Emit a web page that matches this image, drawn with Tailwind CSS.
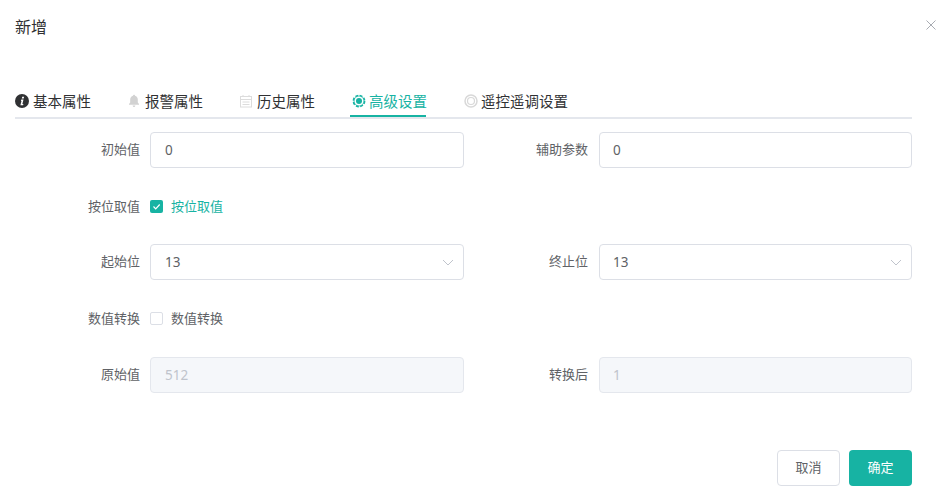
<!DOCTYPE html>
<html lang="zh-CN">
<head>
<meta charset="utf-8">
<script src="https://cdn.jsdelivr.net/npm/@tailwindcss/browser@4"></script>
</head>
<body class="bg-white font-['Noto_Sans','Noto_Sans_CJK_SC',sans-serif] text-[13px] text-[#606266]">
<div class="relative w-[951px] h-[492px] overflow-hidden">
  <h1 class="pl-[15px] pt-[15px] h-[88px] text-[16px] leading-[24px] font-normal text-[#303133]">新增</h1>
  <button class="absolute left-[926px] top-[20px] w-[10px] h-[10px] text-[#a8abb2]">
    <svg viewBox="0 0 10 10" class="w-[10px] h-[10px]" fill="none" stroke="currentColor" stroke-width="1"><path d="M.5.5l9 9M9.5.5l-9 9"/></svg>
  </button>

  <div class="ml-[15px] w-[897px] h-[31px] flex border-b-2 border-[#e4e7ed] text-[14.5px] leading-[26px] text-[#303133]">
    <div class="w-[112px] flex items-center h-[26px]">
      <svg viewBox="0 0 14 14" class="w-[14px] h-[14px] mr-[4px]"><circle cx="7" cy="7" r="7" fill="#303133"/><path d="M7.200 2.800h1.900l-.4 1.700H6.800zM6.300 5.600h2.200l-1.100 4.300h1l-.3 1.300H5.400l1.100-4.300h-.6z" fill="#fff"/></svg>
      <span>基本属性</span>
    </div>
    <div class="w-[112px] flex items-center h-[26px]">
      <svg viewBox="0 0 14 14" class="w-[14px] h-[14px] mr-[4px]" fill="#d2d2d2"><path d="M7 .800c.6 0 1 .4 1 .9 1.800.5 2.800 2 2.800 3.800v3l1.200 1.500v.7H2V10l1.200-1.500v-3C3.200 3.700 4.200 2.200 6 1.700c0-.5.400-.9 1-.9z"/><path d="M5.600 11.500h2.800C8.300 12.400 7.700 13 7 13s-1.300-.6-1.400-1.500z"/></svg>
      <span>报警属性</span>
    </div>
    <div class="w-[111px] flex items-center h-[26px]">
      <svg viewBox="0 0 14 14" class="w-[14px] h-[14px] mr-[4px]" fill="none" stroke="#dcdcdc" stroke-width="1"><rect x="1.500" y="2.500" width="11" height="10.500"/><path d="M1.500 5.500h11M4 1v2M10 1v2M3.500 8h7M3.500 10.500h7"/></svg>
      <span>历史属性</span>
    </div>
    <div class="relative w-[113px] flex items-center h-[26px] text-[#17b3a3]">
      <svg viewBox="0 0 14 14" class="w-[14px] h-[14px] mr-[3px] ml-[2px]" fill="none"><circle cx="7" cy="7" r="5.600" stroke="#17b3a3" stroke-width="1.600" stroke-dasharray="2.900 1.500"/><circle cx="7" cy="7" r="5" stroke="#17b3a3" stroke-width=".7"/><circle cx="7" cy="7" r="3" fill="#17b3a3"/></svg>
      <span>高级设置</span>
      <div class="absolute left-0 top-[27px] w-[76px] h-[2px] bg-[#17b3a3]"></div>
    </div>
    <div class="flex items-center h-[26px] ml-[1px]">
      <svg viewBox="0 0 14 14" class="w-[14px] h-[14px] mr-[3px]" fill="none" stroke="#d8d8d8"><circle cx="7" cy="7" r="6" stroke-width="1.500"/><circle cx="7" cy="7" r="3.500" stroke-width="1.200"/></svg>
      <span>遥控遥调设置</span>
    </div>
  </div>

  <div class="ml-[15px] mt-[13px] w-[897px] grid grid-cols-[449px_448px] auto-rows-[36px] gap-y-[20px] leading-[34px]">
    <div class="flex"><label class="w-[125px] text-right">初始值</label><div class="ml-[10px] w-[314px] h-[36px] border border-[#dcdfe6] rounded-[4px] px-[14px] text-[13.5px] leading-[34px]">0</div></div>
    <div class="flex"><label class="w-[124px] text-right">辅助参数</label><div class="ml-[11px] w-[313px] h-[36px] border border-[#dcdfe6] rounded-[4px] px-[13px] text-[13.5px] leading-[34px]">0</div></div>

    <div class="flex leading-[36px]"><label class="w-[125px] text-right">按位取值</label><div class="ml-[10px] flex items-center h-[36px] text-[#17b3a3]"><span class="w-[13px] h-[13px] rounded-[2px] bg-[#17b3a3] flex items-center justify-center mr-[8px]"><svg viewBox="0 0 13 13" class="w-[13px] h-[13px]" fill="none" stroke="#fff" stroke-width="1.200"><path d="M3.500 6.500 5.700 8.800 9.700 4.500"/></svg></span>按位取值</div></div>
    <div></div>

    <div class="flex"><label class="w-[125px] text-right">起始位</label><div class="relative ml-[10px] w-[314px] h-[36px] border border-[#dcdfe6] rounded-[4px] px-[14px] text-[13.5px] leading-[34px]">13<svg viewBox="0 0 12 12" class="absolute right-[9px] top-[11px] w-[12px] h-[12px]" fill="none" stroke="#c0c4cc"><path d="M1 4l5 5 5-5"/></svg></div></div>
    <div class="flex"><label class="w-[124px] text-right">终止位</label><div class="relative ml-[11px] w-[313px] h-[36px] border border-[#dcdfe6] rounded-[4px] px-[13px] text-[13.5px] leading-[34px]">13<svg viewBox="0 0 12 12" class="absolute right-[9px] top-[11px] w-[12px] h-[12px]" fill="none" stroke="#c0c4cc"><path d="M1 4l5 5 5-5"/></svg></div></div>

    <div class="flex leading-[36px]"><label class="w-[125px] text-right">数值转换</label><div class="ml-[10px] flex items-center h-[36px]"><span class="w-[13px] h-[13px] rounded-[2px] border border-[#dcdfe6] mr-[8px]"></span>数值转换</div></div>
    <div></div>

    <div class="flex mt-[1px]"><label class="w-[125px] text-right">原始值</label><div class="ml-[10px] w-[314px] h-[36px] border border-[#e4e7ed] bg-[#f5f7fa] rounded-[4px] px-[14px] text-[13.5px] leading-[34px] text-[#c0c4cc]">512</div></div>
    <div class="flex mt-[1px]"><label class="w-[124px] text-right">转换后</label><div class="ml-[11px] w-[313px] h-[36px] border border-[#e4e7ed] bg-[#f5f7fa] rounded-[4px] px-[13px] text-[13.5px] leading-[34px] text-[#c0c4cc]">1</div></div>
  </div>

  <div class="absolute left-[777px] top-[450px] flex gap-[9px]">
    <button class="w-[63px] h-[36px] pb-[1px] border border-[#dcdfe6] rounded-[4px] bg-white text-[13px] text-[#606266]">取消</button>
    <button class="w-[63px] h-[36px] pb-[1px] rounded-[4px] bg-[#17b3a3] text-[13px] text-white">确定</button>
  </div>
</div>
</body>
</html>
